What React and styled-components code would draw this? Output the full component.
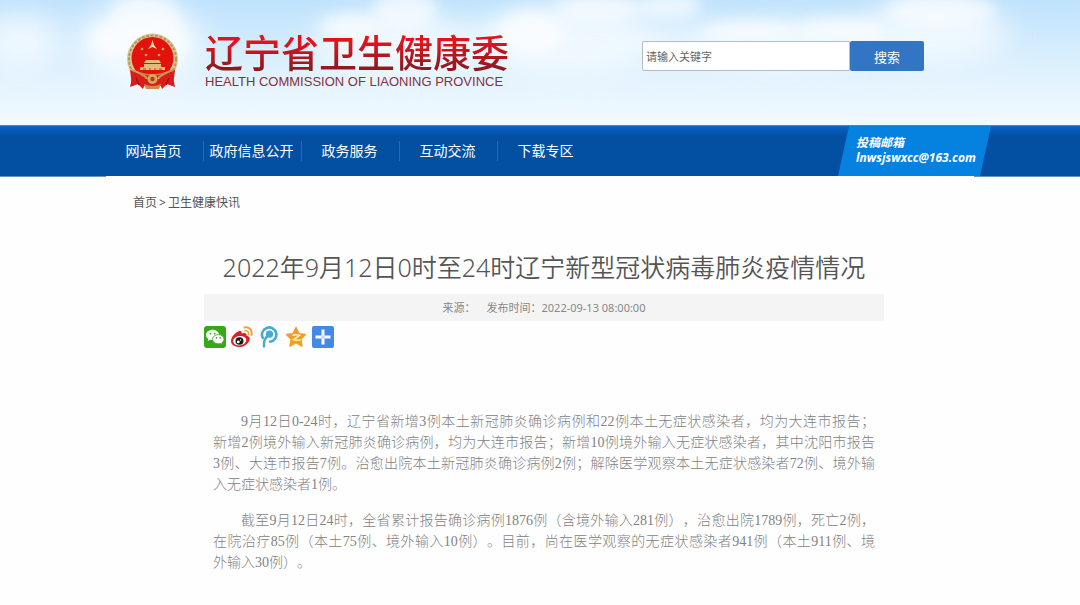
import React from 'react';
import styled, { createGlobalStyle } from 'styled-components';

const GlobalStyle = createGlobalStyle`
  * {
    box-sizing: border-box;
  }

  body {
    margin: 0;
    background: #fefefe;
    color: #555;
    font-family: 'Noto Sans', 'Noto Sans CJK SC', sans-serif;
    font-size: 12px;
  }

  a {
    color: inherit;
    text-decoration: none;
  }
`;

const Container = styled.div`
  position: relative;
  display: flex;
  width: 100%;
  max-width: 868px;
  margin: 0 auto;
`;

const Header = styled.header`
  position: relative;
  height: 125px;
  overflow: hidden;
  background: linear-gradient(#bfe2fc 0%, #d6edfd 40%, #e8f5fe 75%, #f2f9fe 100%);
`;

const Sky = styled.svg`
  position: absolute;
  inset: 0;
  width: 100%;
  height: 100%;
`;

const Brand = styled.a`
  display: flex;
  align-items: center;
  gap: 26px;
  padding: 30px 0 0 20px;
`;

const BrandText = styled.div`
  display: flex;
  flex-direction: column;
  white-space: nowrap;
`;

const BrandName = styled.span`
  color: transparent;
  background: linear-gradient(#e0141c 30%, #8e1a20 90%);
  background-clip: text;
  font-family: 'Noto Sans CJK SC', sans-serif;
  font-size: 38px;
  font-weight: 500;
  line-height: 42px;
`;

const BrandLatin = styled.span`
  color: #86303c;
  font-family: 'Liberation Sans', Arial, sans-serif;
  font-size: 13px;
  line-height: 20px;
`;

const Search = styled.form`
  display: flex;
  height: 30px;
  margin: 41px 50px 0 auto;
`;

const SearchInput = styled.input`
  width: 208px;
  padding: 0 3px;
  border: 1px solid #b4bcc2;
  border-radius: 2px 0 0 2px;
  background: #fff;
  font-family: inherit;
  font-size: 11px;

  &::placeholder {
    color: #666;
    opacity: 1;
  }
`;

const SearchButton = styled.button`
  width: 74px;
  padding: 0;
  border: 0;
  border-radius: 2px;
  background: #3276c3;
  color: #fff;
  font-family: inherit;
  font-size: 13px;
`;

const NavBar = styled.nav`
  height: 52px;
  border-top: 1px solid #3c8ad6;
  border-bottom: 1px solid #6c92bd;
  background: linear-gradient(#0b62c8 0, #0350a3 10px, #0350a3 100%);
`;

const NavItem = styled.a`
  width: 98px;
  height: 20px;
  margin-top: 15px;
  padding-right: 2px;
  border-right: 1px solid ${(props) => (props.$last ? 'transparent' : '#1a6cc4')};
  color: #fff;
  font-size: 14px;
  line-height: 20px;
  text-align: center;
  white-space: nowrap;
`;

const MailBanner = styled.a`
  position: absolute;
  top: 0;
  right: -17px;
  display: flex;
  flex-direction: column;
  width: 153px;
  height: 50px;
  padding: 9px 0 0 18px;
  background: #0581e0;
  clip-path: polygon(11px 0, 100% 0, 142px 100%, 0 100%);
  color: #fff;
  font-family: 'Open Sans', 'Noto Sans CJK SC', sans-serif;
  font-size: 12px;
  font-style: italic;
  font-weight: 700;
  line-height: 15px;
`;

/* laid over the bottom line of the nav, which shows only beside the page */
const Page = styled(Container)`
  flex-direction: column;
  margin-top: -1px;
  background: #fefefe;
`;

const Breadcrumb = styled.nav`
  display: flex;
  gap: 2px;
  padding: 18px 0 0 27px;
  line-height: 18px;
`;

const Article = styled.article`
  padding: 38px 90px 32px 98px;
`;

const Title = styled.h1`
  margin: 0;
  color: #555;
  font-size: 25px;
  font-weight: 350;
  line-height: 34px;
  text-align: center;
`;

const Meta = styled.div`
  display: flex;
  justify-content: center;
  gap: 11px;
  height: 27px;
  margin-top: 10px;
  background: #f4f4f4;
  color: #888;
  font-size: 11px;
  line-height: 27px;
`;

const ShareList = styled.div`
  display: flex;
  gap: 5px;
  padding-top: 5px;
`;

const ShareButton = styled.button`
  display: block;
  width: 22px;
  height: 22px;
  padding: 0;
  border: 0;
  background: none;
`;

const Content = styled.div`
  padding: 63px 9px 0;
`;

const Paragraph = styled.p`
  margin: 0 0 15px;
  color: #828282;
  font-family: 'Liberation Serif', 'Noto Sans CJK SC', serif;
  font-size: 14px;
  font-weight: 300;
  line-height: 21px;
  text-align: justify;
  text-indent: 2em;
  text-spacing-trim: space-all;
`;

const NoBreak = styled.span`
  white-space: nowrap;
`;

function Clouds() {
  return (
    <Sky viewBox="0 0 1080 125" preserveAspectRatio="none" aria-hidden="true">
      <defs>
        <filter id="haze" x="-40%" y="-60%" width="180%" height="220%">
          <feGaussianBlur stdDeviation="14" />
        </filter>
        <filter id="puff" x="-40%" y="-60%" width="180%" height="220%">
          <feGaussianBlur stdDeviation="7" />
        </filter>
      </defs>
      <g fill="#fff" filter="url(#haze)" opacity="0.65">
        <ellipse cx="20" cy="40" rx="40" ry="26" />
        <ellipse cx="140" cy="42" rx="62" ry="40" />
        <ellipse cx="400" cy="44" rx="90" ry="28" />
        <ellipse cx="570" cy="40" rx="100" ry="34" />
        <ellipse cx="780" cy="44" rx="120" ry="22" />
        <ellipse cx="930" cy="34" rx="80" ry="30" />
      </g>
      <g fill="#fff" filter="url(#puff)" opacity="0.65">
        <ellipse cx="145" cy="14" rx="34" ry="20" />
        <ellipse cx="118" cy="40" rx="30" ry="16" />
        <ellipse cx="165" cy="40" rx="22" ry="24" />
        <ellipse cx="350" cy="26" rx="30" ry="12" />
        <ellipse cx="405" cy="10" rx="32" ry="20" />
        <ellipse cx="530" cy="32" rx="34" ry="22" />
        <ellipse cx="600" cy="8" rx="46" ry="14" />
        <ellipse cx="670" cy="6" rx="32" ry="14" />
        <ellipse cx="750" cy="32" rx="50" ry="10" />
        <ellipse cx="840" cy="30" rx="44" ry="12" />
        <ellipse cx="940" cy="10" rx="56" ry="16" />
      </g>
    </Sky>
  );
}

function Emblem() {
  return (
    <svg width="53" height="58" viewBox="0 0 53 58" aria-hidden="true">
      <path d="M7 40 L4 55 L12 52 L17 57 L21 47 Z" fill="#dd1a1c" />
      <path d="M46 40 L49 55 L41 52 L36 57 L32 47 Z" fill="#dd1a1c" />
      <circle cx="26.5" cy="27" r="25.5" fill="#dcc795" />
      <circle cx="26.5" cy="27" r="23.5" fill="none" stroke="#b3975c" strokeWidth="2" strokeDasharray="3 1.5" />
      <circle cx="26.5" cy="26" r="21" fill="#e3120f" />
      <path d="M26.5 8 L28 13 L31 17 L26.5 15 L22 17 L25 13 Z" fill="#f0d9a0" />
      <g fill="#e8a34c">
        <circle cx="16" cy="17" r="1.3" />
        <circle cx="37" cy="17" r="1.3" />
        <circle cx="20" cy="23" r="1.3" />
        <circle cx="33" cy="23" r="1.3" />
      </g>
      <path d="M20 28 h13 l2 3 h-17 Z M18 32 h17 v3 h-17 Z M14 35 h25 v3 h-25 Z" fill="#e5bd7a" />
      <path d="M17 37 h3 m3 0 h2 m3 0 h2 m3 0 h3" stroke="#b84a28" strokeWidth="1" />
      <path d="M4 38 Q16 42 20 47 H33 Q37 42 49 38 L47 54 L40 51 L34 54 H19 L13 51 L6 54 Z" fill="#dc1c1b" />
      <path d="M6 38 Q15 41 21 46 M47 38 Q38 41 32 46" fill="none" stroke="#c99b55" strokeWidth="2" />
      <path d="M14 41 Q26.5 45 39 41" fill="none" stroke="#c98345" strokeWidth="1.5" />
      <circle cx="26.5" cy="47" r="5" fill="#d9a75e" />
      <circle cx="26.5" cy="47" r="2.2" fill="#c3331f" />
      <path d="M18 52 Q26.5 56 35 52 L33 57 H20 Z" fill="#cf8c48" />
      <path d="M10 46 L13 53 M43 46 L40 53" stroke="#a70f14" strokeWidth="1.5" />
    </svg>
  );
}

function WechatIcon() {
  return (
    <svg width="22" height="22" viewBox="0 0 22 22" aria-hidden="true">
      <rect width="22" height="22" rx="3" fill="#37a818" />
      <path d="M8.6 3.8 C4.8 3.8 2 6.1 2 9 c0 1.7 .9 3 2.3 4 l-.6 2 2.3-1.2 c.8 .2 1.7 .3 2.6 .3 C12.3 14.1 15.1 11.8 15.1 9 S12.3 3.8 8.6 3.8 Z" fill="#fff" />
      <circle cx="6.5" cy="7.6" r="0.9" fill="#37a818" />
      <circle cx="10.7" cy="7.6" r="0.9" fill="#37a818" />
      <path d="M14.3 8.6 c-3.3 0-5.8 2-5.8 4.6 s2.5 4.6 5.8 4.6 c.7 0 1.4-.1 2-.3 l2 1.1-.5-1.8 c1.3-.9 2.2-2.1 2.2-3.6 0-2.6-2.5-4.6-5.7-4.6 Z" fill="#fff" stroke="#37a818" strokeWidth="0.8" />
      <circle cx="12.5" cy="11.9" r="0.8" fill="#37a818" />
      <circle cx="16.2" cy="11.9" r="0.8" fill="#37a818" />
    </svg>
  );
}

function WeiboIcon() {
  return (
    <svg width="22" height="22" viewBox="0 0 22 22" aria-hidden="true">
      <path d="M8.5 5 C10.5 4.5 11 6 10.5 7.5 C13 6.5 16 6.5 15.5 9.5 C19 10.5 19.5 13 18 15.5 C16 19 12.5 21 8.5 21 C3.5 21 0 18.5 0 15 C0 11 4.5 6 8.5 5 Z" fill="#d9202b" />
      <ellipse cx="8.7" cy="14.7" rx="6.6" ry="4.7" fill="#fff" transform="rotate(-8 8.7 14.7)" />
      <ellipse cx="8.5" cy="15" rx="4" ry="3.8" fill="#151515" />
      <circle cx="7.3" cy="15.9" r="1.4" fill="#fff" />
      <circle cx="9.6" cy="14" r="0.7" fill="#fff" />
      <path d="M13.5 1.5 C18 .5 21.5 4 20.5 9" fill="none" stroke="#eda23b" strokeWidth="2" strokeLinecap="round" />
      <path d="M14 4.8 C16.5 4.3 18 6 17.5 8.3" fill="none" stroke="#eda23b" strokeWidth="1.6" strokeLinecap="round" />
    </svg>
  );
}

function TencentIcon() {
  return (
    <svg width="22" height="22" viewBox="0 0 22 22" aria-hidden="true">
      <path d="M4.8 12 A7.2 7.2 0 1 1 12 15.8" fill="none" stroke="#45abd0" strokeWidth="2.6" strokeLinecap="round" />
      <circle cx="11.5" cy="8.2" r="3.6" fill="#45abd0" />
      <path d="M10.5 9 C7 12 5.5 16 6 20.5" fill="none" stroke="#45abd0" strokeWidth="2.4" strokeLinecap="round" />
    </svg>
  );
}

function QzoneIcon() {
  return (
    <svg width="22" height="22" viewBox="0 0 22 22" aria-hidden="true">
      <path
        d="M11 1.5 L13.9 7.7 L20.5 8.5 L15.7 13.2 L17 20 L11 16.7 L5 20 L6.3 13.2 L1.5 8.5 L8.1 7.7 Z"
        fill="#efa01e"
        stroke="#efa01e"
        strokeWidth="1.5"
        strokeLinejoin="round"
      />
      <path d="M7.5 9.3 Q11 8.3 14.5 9.3 L8.5 13.8 Q12 14.8 15.5 13.6" fill="none" stroke="#fff0bd" strokeWidth="1.5" />
    </svg>
  );
}

function MoreIcon() {
  return (
    <svg width="22" height="22" viewBox="0 0 22 22" aria-hidden="true">
      <rect width="22" height="22" rx="2" fill="#438ae4" />
      <path d="M11 3.5 V18.5 M3.5 11 H18.5" stroke="#fff" strokeWidth="3" />
      <path d="M11 9 V13 M9 11 H13" stroke="#a9cbf5" strokeWidth="1" />
    </svg>
  );
}

const navItems = ['网站首页', '政府信息公开', '政务服务', '互动交流', '下载专区'];

const shareItems = [
  { name: '微信', icon: WechatIcon },
  { name: '新浪微博', icon: WeiboIcon },
  { name: '腾讯微博', icon: TencentIcon },
  { name: 'QQ空间', icon: QzoneIcon },
  { name: '更多', icon: MoreIcon },
];

function App() {
  return (
    <>
      <GlobalStyle />
      <Header>
        <Clouds />
        <Container>
          <Brand href="#">
            <Emblem />
            <BrandText>
              <BrandName>辽宁省卫生健康委</BrandName>
              <BrandLatin>HEALTH COMMISSION OF LIAONING PROVINCE</BrandLatin>
            </BrandText>
          </Brand>
          <Search onSubmit={(e) => e.preventDefault()}>
            <SearchInput type="text" placeholder="请输入关键字" aria-label="请输入关键字" />
            <SearchButton type="submit">搜索</SearchButton>
          </Search>
        </Container>
      </Header>
      <NavBar>
        <Container>
          {navItems.map((item, i) => (
            <NavItem key={item} href="#" $last={i === navItems.length - 1}>
              {item}
            </NavItem>
          ))}
          <MailBanner href="mailto:lnwsjswxcc@163.com">
            <span>投稿邮箱</span>
            <span>lnwsjswxcc@163.com</span>
          </MailBanner>
        </Container>
      </NavBar>
      <Page as="main">
        <Breadcrumb>
          <a href="#">首页</a>
          <span>&gt;</span>
          <a href="#">卫生健康快讯</a>
        </Breadcrumb>
        <Article>
          <Title>2022年9月12日0时至24时辽宁新型冠状病毒肺炎疫情情况</Title>
          <Meta>
            <span>来源：</span>
            <span>发布时间：2022-09-13 08:00:00</span>
          </Meta>
          <ShareList>
            {shareItems.map((share) => (
              <ShareButton key={share.name} type="button" aria-label={share.name}>
                <share.icon />
              </ShareButton>
            ))}
          </ShareList>
          <Content>
            <Paragraph>
              9月12日0-24时，辽宁省新增3例本土新冠肺炎确诊病例和22例本土无症状感染者，均为大连市报告；
              <NoBreak>新增</NoBreak>2例境外输入新冠肺炎确诊病例，均为大连市报告；新增10例境外输入无症状感染者，其中沈阳市报告
              <NoBreak>3例</NoBreak>、大连市报告7例。治愈出院本土新冠肺炎确诊病例2例；解除医学观察本土无症状感染者72例、境外输入无症状感染者1例。
            </Paragraph>
            <Paragraph>
              截至9月12日24时，全省累计报告确诊病例1876例（含境外输入281例），治愈出院1789例，死亡2例，在院治疗85例（本土75例、境外输入10例）。目前，尚在医学观察的无症状感染者941例（本土911例、境
              <NoBreak>外输入</NoBreak>30例）。
            </Paragraph>
          </Content>
        </Article>
      </Page>
    </>
  );
}

export default App;
